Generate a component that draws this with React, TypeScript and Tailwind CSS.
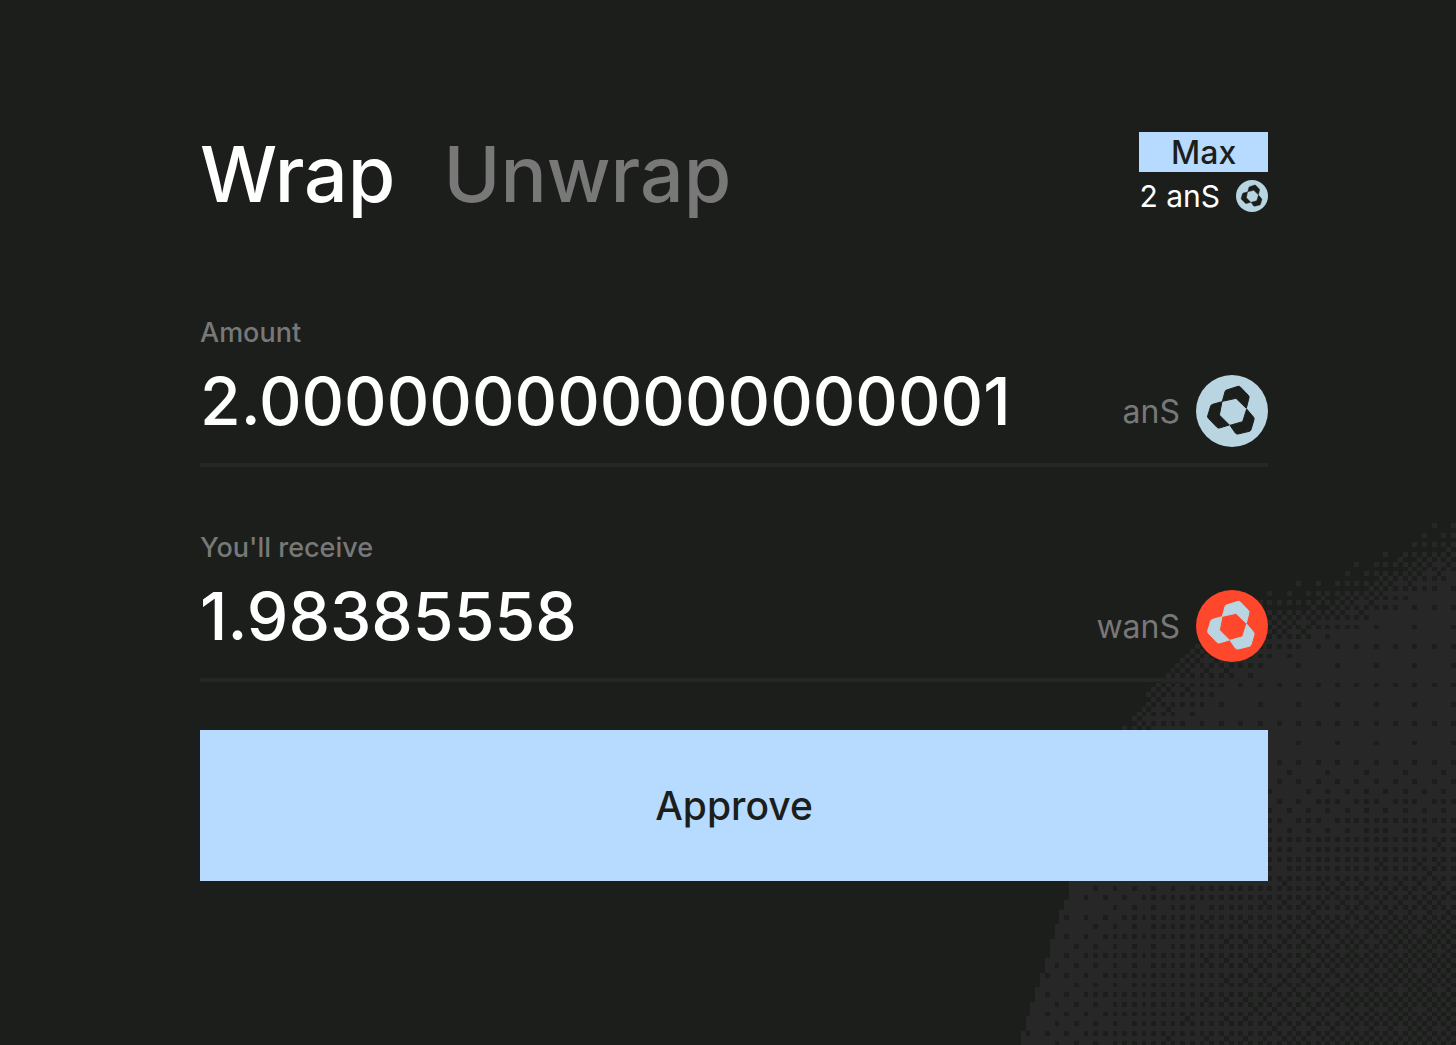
import { useState } from 'react';

const COLS = 92;
const ROWS = 108;

const BAYER = [
  [0, 32, 8, 40, 2, 34, 10, 42],
  [48, 16, 56, 24, 50, 18, 58, 26],
  [12, 44, 4, 36, 14, 46, 6, 38],
  [60, 28, 52, 20, 62, 30, 54, 22],
  [3, 35, 11, 43, 1, 33, 9, 41],
  [51, 19, 59, 27, 49, 17, 57, 25],
  [15, 47, 7, 39, 13, 45, 5, 37],
  [63, 31, 55, 23, 61, 29, 53, 21],
];

// Upper outline of the shape as [column, row] pairs
const OUTLINE = [
  [20, 46],
  [25, 39],
  [31, 31],
  [36, 25],
  [42, 20],
  [53, 13],
  [60, 11],
  [72, 7],
  [87, -1],
  [92, -2],
];

const clamp = (n: number) => Math.max(0, Math.min(1, n));

function outlineAt(col: number) {
  for (let i = 1; i < OUTLINE.length; i++) {
    const [x0, y0] = OUTLINE[i - 1];
    const [x1, y1] = OUTLINE[i];
    if (col <= x1) return y0 + ((y1 - y0) * (col - x0)) / (x1 - x0);
  }
  return 0;
}

function density(col: number, row: number) {
  const edge = 1 + (ROWS - row) * 0.314;
  const depth = row - outlineAt(col);
  if (col < edge || depth < 0) return 0;
  // the top fade starts denser and runs longer on the left side
  const u = clamp((col - 35) / 25);
  const rise = 0.42 - 0.42 * u + depth / (30 - 14 * u);
  const fall = clamp((row - 46) / 36) * Math.pow(clamp((col - edge) / 76), 0.7);
  return Math.min(rise, 0.955 - 0.42 * fall);
}

function buildDither() {
  let d = '';
  for (let r = 0; r < ROWS; r++) {
    for (let c = 0; c < COLS; c++) {
      const threshold = (BAYER[(ROWS * 8 - r) % 8][(c + 1) % 8] + 0.5) / 64;
      if (density(c, r) > threshold) d += `M${c} ${r}h1v1h-1z`;
    }
  }
  return d;
}

const DITHER = buildDither();

function TokenIcon({ className, bg, fg }: { className: string; bg: string; fg: string }) {
  return (
    <svg viewBox="0 0 216 216" className={className} aria-hidden="true">
      <circle cx="108" cy="108" r="108" className={bg} />
      <g className={fg} strokeWidth="3" strokeLinejoin="round">
        <path d="M79 79L87 50Q88 46 92 45L126 34Q130 33 133 36L157 61Q160 64 159 68L151 100L120 70Z" />
        <path d="M78 80L70 120L100 150L70 159Q66 160 63 157L37 130Q34 127 35 123L44 93Q46 89 50 88Z" />
        <path d="M152 102L173 127Q175 130 174 134L165 164Q164 168 160 169L126 177Q121 178 118 174L102 151L140 140Z" />
      </g>
    </svg>
  );
}

interface FieldProps {
  id: string;
  label: string;
  value: string;
  token: string;
  bg: string;
  fg: string;
  readOnly?: boolean;
  onChange?: (value: string) => void;
}

function Field({ id, label, value, token, bg, fg, readOnly, onChange }: FieldProps) {
  return (
    <div>
      <label htmlFor={id} className="block text-[27px] leading-8 font-medium text-[#787878]">
        {label}
      </label>
      <div className="flex h-[118px] items-center gap-4 border-b-4 border-[#262626] pt-[10px]">
        <input
          id={id}
          value={value}
          readOnly={readOnly}
          onChange={(e) => onChange?.(e.target.value)}
          className="h-20 min-w-0 flex-1 bg-transparent pb-5 text-[66px] leading-none font-medium text-white outline-none"
        />
        <span className="pt-0.5 text-[32px] leading-10 text-[#787878]">{token}</span>
        <TokenIcon className="size-18" bg={bg} fg={fg} />
      </div>
    </div>
  );
}

export default function App() {
  const [mode, setMode] = useState<'wrap' | 'unwrap'>('wrap');
  const [amount, setAmount] = useState('2.000000000000000001');

  return (
    <div className="relative min-h-screen overflow-hidden bg-[#1c1e1b] font-['Inter','Liberation_Sans',sans-serif]">
      <svg
        viewBox={`0 0 ${COLS} ${ROWS}`}
        shapeRendering="crispEdges"
        className="absolute right-0 bottom-0 w-[445px] fill-[#272727]"
        aria-hidden="true"
      >
        <path d={DITHER} />
      </svg>

      <main className="relative flex flex-col pt-[132px] pr-[188px] pb-40 pl-[200px]">
        <header className="flex items-start justify-between">
          <div className="flex gap-12 text-[77px] leading-[84px] font-medium">
            <button
              type="button"
              onClick={() => setMode('wrap')}
              className={mode === 'wrap' ? 'text-white' : 'text-[#787878]'}
            >
              Wrap
            </button>
            <button
              type="button"
              onClick={() => setMode('unwrap')}
              className={mode === 'unwrap' ? 'text-white' : 'text-[#787878]'}
            >
              Unwrap
            </button>
          </div>
          <div className="flex flex-col gap-2">
            <button
              type="button"
              onClick={() => setAmount('2')}
              className="h-10 bg-[#b7dbff] pt-0.5 text-[32px] leading-9 font-medium text-[#1c1e1b]"
            >
              Max
            </button>
            <div className="flex items-center gap-4 text-[30px] leading-8 text-white">
              <span>2 anS</span>
              <TokenIcon className="size-8" bg="fill-[#b9d5e1]" fg="fill-[#1c1e1b] stroke-[#1c1e1b]" />
            </div>
          </div>
        </header>

        <div className="mt-[101px] flex flex-col gap-[65px]">
          <Field
            id="amount"
            label="Amount"
            value={amount}
            token="anS"
            bg="fill-[#b9d5e1]"
            fg="fill-[#1c1e1b] stroke-[#1c1e1b]"
            onChange={setAmount}
          />
          <Field
            id="receive"
            label="You'll receive"
            value="1.98385558"
            token="wanS"
            bg="fill-[#ff472b]"
            fg="fill-[#b9d5e1] stroke-[#b9d5e1]"
            readOnly
          />
        </div>

        <button
          type="button"
          className="mt-12 h-[151px] bg-[#b7dbff] text-[39px] leading-none font-medium text-[#1c1e1b]"
        >
          Approve
        </button>
      </main>
    </div>
  );
}
